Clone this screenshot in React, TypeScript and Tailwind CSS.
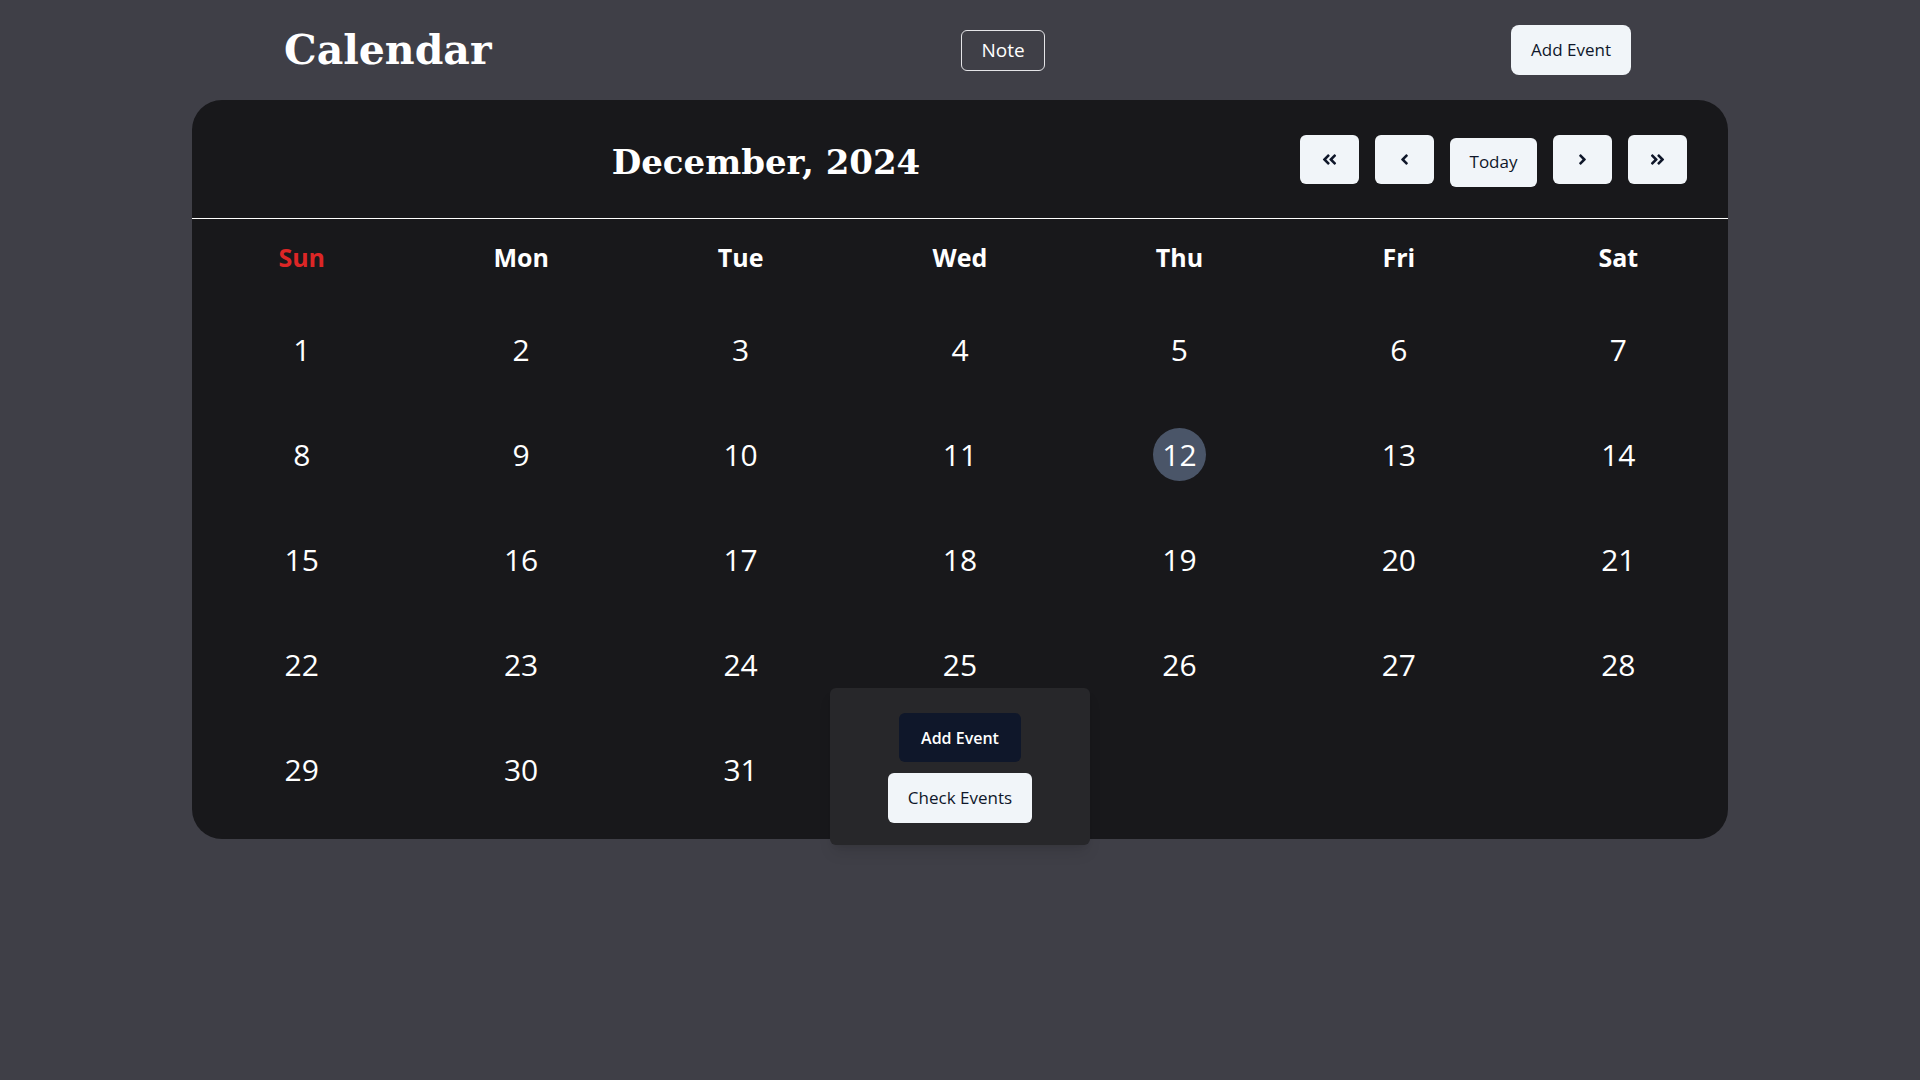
import React from 'react';
import { FaAngleDoubleLeft, FaAngleLeft, FaAngleRight, FaAngleDoubleRight } from 'react-icons/fa';

const WEEKDAYS = ['Sun', 'Mon', 'Tue', 'Wed', 'Thu', 'Fri', 'Sat'];
const TODAY = 12;
const SELECTED = 25;

const NavButton: React.FC<{ children: React.ReactNode }> = ({ children }) => (
  <button className="w-[59px] h-[49px] rounded-md bg-slate-100 text-[#0f172a] flex items-center justify-center">
    {children}
  </button>
);

export default function App() {
  // December 2024 starts on a Sunday, so no leading blanks
  const cells: (number | null)[] = [...Array.from({ length: 31 }, (_, i) => i + 1), null, null, null, null];

  return (
    <div className="min-h-screen bg-zinc-700 text-white font-['Open_Sans',sans-serif]">
      {/* Top bar */}
      <div className="w-4/5 mx-auto h-[100px] pl-[92px] pr-[97px] flex items-center justify-between">
        <h1 className="w-[211px] text-[41px] leading-none font-bold font-['DejaVu_Serif',serif] whitespace-nowrap">
          Calendar
        </h1>
        <button className="h-[41px] px-[19px] text-[19px] border border-zinc-200 rounded-md text-white">Note</button>
        <button className="h-[50px] px-5 text-[17px] bg-slate-100 text-[#0f172a] rounded-lg">Add Event</button>
      </div>

      {/* Calendar card */}
      <div className="w-4/5 mx-auto bg-zinc-900 rounded-[30px] pb-[17px]">
        <div className="h-[119px] border-b border-white pl-10 pr-[41px] flex items-center">
          <h2 className="flex-1 text-center pt-[7px] text-[34px] font-bold font-['DejaVu_Serif',serif]">
            December, 2024
          </h2>
          <div className="mt-[3px] flex items-start gap-4">
            <NavButton>
              <FaAngleDoubleLeft size={17} />
            </NavButton>
            <NavButton>
              <FaAngleLeft size={17} />
            </NavButton>
            <button className="mt-[3px] h-[49px] w-[87px] rounded-md bg-slate-100 text-[#0f172a] text-[17px]">
              Today
            </button>
            <NavButton>
              <FaAngleRight size={17} />
            </NavButton>
            <NavButton>
              <FaAngleDoubleRight size={17} />
            </NavButton>
          </div>
        </div>

        <div className="grid grid-cols-7">
          {WEEKDAYS.map(d => (
            <div
              key={d}
              className={`h-[78px] flex items-center justify-center text-[25px] font-bold ${d === 'Sun' ? 'text-[#dc2626]' : 'text-white'}`}
            >
              {d}
            </div>
          ))}

          {cells.map((n, i) => (
            <div key={i} className="relative h-[105px] flex items-center justify-center text-[30px]">
              {n === TODAY ? (
                <span className="w-[53px] h-[53px] rounded-full bg-[#4a5568] flex items-center justify-center">{n}</span>
              ) : (
                n
              )}

              {n === SELECTED && (
                <div className="absolute z-10 top-[76px] left-1/2 -translate-x-1/2 w-[260px] bg-zinc-800 rounded-md shadow-lg pt-[25px] pb-[22px] flex flex-col items-center gap-[11px]">
                  <button className="h-[49px] px-[22px] rounded-md bg-[#0f172a] text-white text-base font-semibold">
                    Add Event
                  </button>
                  <button className="h-[50px] px-5 rounded-md bg-slate-100 text-[#0f172a] text-[17px]">
                    Check Events
                  </button>
                </div>
              )}
            </div>
          ))}
        </div>
      </div>
    </div>
  );
}
